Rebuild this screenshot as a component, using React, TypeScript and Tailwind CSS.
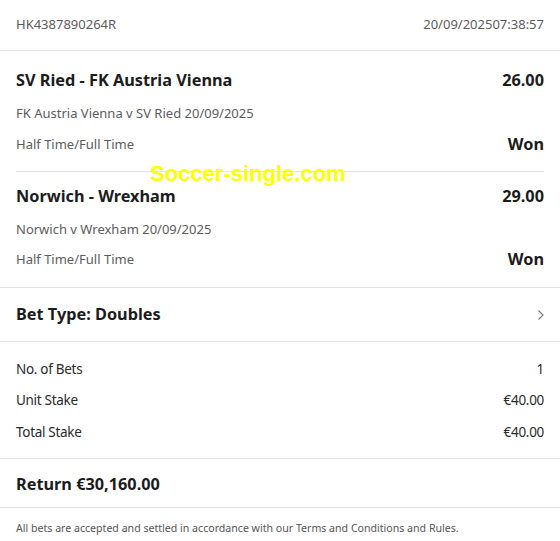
import React from 'react'

type Leg = { title: string; odds: string; event: string; market: string; result: string; pt: string; pb: string; gap: string }

const legs: Leg[] = [
  { title: 'SV Ried - FK Austria Vienna', odds: '26.00', event: 'FK Austria Vienna v SV Ried 20/09/2025', market: 'Half Time/Full Time', result: 'Won', pt: 'pt-[17px]', pb: 'pb-[16px]', gap: 'mt-[12px]' },
  { title: 'Norwich - Wrexham', odds: '29.00', event: 'Norwich v Wrexham 20/09/2025', market: 'Half Time/Full Time', result: 'Won', pt: 'pt-[12px]', pb: 'pb-[17px]', gap: 'mt-[11px]' },
]

export default function App() {
  return (
    <div className="relative w-[560px] h-[541px] bg-white text-[#1c1c1c] font-['Noto_Sans',sans-serif] overflow-hidden">
      {/* header */}
      <div className="flex h-[51px] items-center justify-between border-b border-[#e3e3e3] px-4 text-[13px] text-[#5c5c5c]">
        <span>HK4387890264R</span>
        <span>20/09/202507:38:57</span>
      </div>

      {/* legs */}
      <div className="px-4">
        {legs.map((leg, i) => (
          <div key={i} className={`${leg.pt} ${leg.pb} ${i === 0 ? 'border-b border-[#e3e3e3]' : ''}`}>
            <div className="flex items-center justify-between text-[16.3px] leading-6 font-bold">
              <span>{leg.title}</span>
              <span>{leg.odds}</span>
            </div>
            <div className="mt-[11px] text-[13px] leading-5 text-[#5c5c5c]">{leg.event}</div>
            <div className={`${leg.gap} flex items-center justify-between h-5`}>
              <span className="text-[13px] text-[#5c5c5c]">{leg.market}</span>
              <span className="text-[16.3px] font-bold leading-5 -mt-[2px]">{leg.result}</span>
            </div>
          </div>
        ))}
      </div>

      {/* bet type */}
      <div className="flex h-[55px] items-center justify-between border-y border-[#e3e3e3] px-4">
        <span className="text-[16.3px] font-bold">Bet Type: Doubles</span>
        <svg width="8" height="12" viewBox="0 0 8 12" className="mr-[-1px]">
          <path d="M1.5 1.5 L6 6 L1.5 10.5" fill="none" stroke="#777" strokeWidth="1.1" />
        </svg>
      </div>

      {/* stakes */}
      <div className="flex flex-col gap-[7.5px] border-b border-[#e3e3e3] px-4 pt-[15px] pb-[14px] text-[13.5px] tracking-[-0.3px] text-[#2a2a2a]">
        <div className="flex h-6 items-center justify-between"><span>No. of Bets</span><span>1</span></div>
        <div className="flex h-6 items-center justify-between"><span>Unit Stake</span><span>€40.00</span></div>
        <div className="flex h-6 items-center justify-between"><span>Total Stake</span><span>€40.00</span></div>
      </div>

      {/* return */}
      <div className="flex h-[49px] items-center border-b border-[#e3e3e3] px-4 pt-[2px] text-[16.3px] font-bold">
        Return €30,160.00
      </div>

      {/* footer */}
      <div className="px-4 pt-[13px] text-[10.6px] text-[#555]">
        All bets are accepted and settled in accordance with our Terms and Conditions and Rules.
      </div>

      {/* watermark */}
      <div className="absolute left-[150px] top-[159px] font-['Liberation_Sans',sans-serif] text-[22px] font-bold leading-[30px] text-[#ffff00]">
        Soccer-single.com
      </div>
    </div>
  )
}
